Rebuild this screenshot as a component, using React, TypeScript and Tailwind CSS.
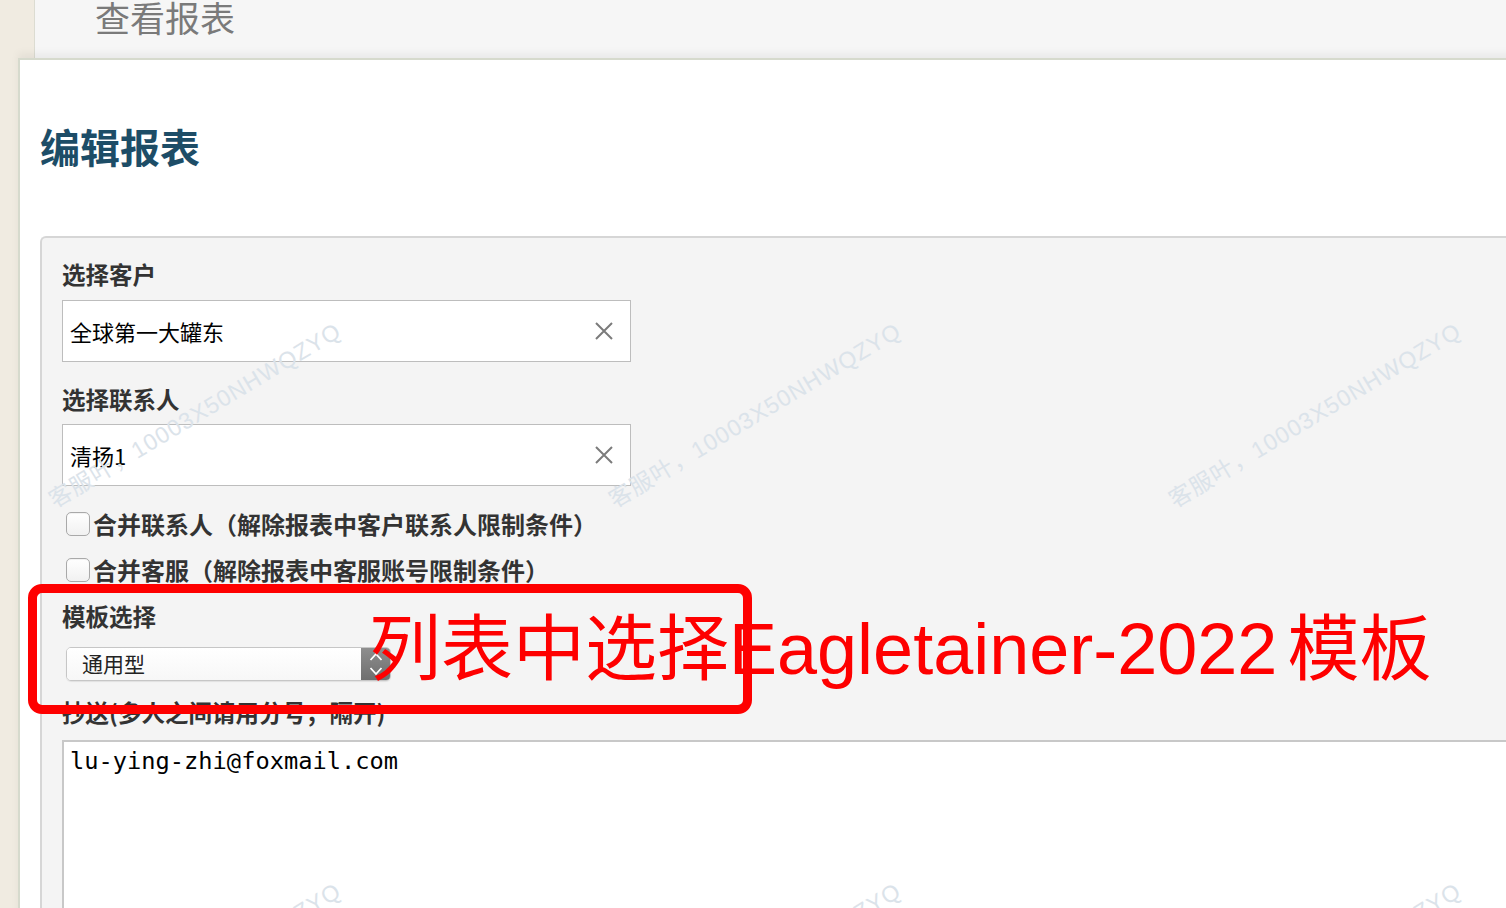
import React from 'react';

const CJK = '"Noto Sans CJK SC", "Liberation Sans", sans-serif';

const ClearIcon: React.FC = () => (
  <svg width="18" height="18" viewBox="0 0 18 18" className="shrink-0">
    <path d="M1 1 L17 17 M17 1 L1 17" stroke="#7b7b7b" strokeWidth="2" fill="none" />
  </svg>
);

const Field: React.FC<{ value: string }> = ({ value }) => (
  <div className="flex h-[62px] w-[569px] items-center justify-between border border-[#bdbdbd] bg-white pl-[7px] pr-[17px]">
    <span className="text-[22px] text-black">{value}</span>
    <ClearIcon />
  </div>
);

const Label: React.FC<{ children: React.ReactNode; className?: string }> = ({ children, className }) => (
  <div className={`h-[32px] text-[23.5px] font-bold leading-[32px] text-[#333] ${className ?? ''}`}>{children}</div>
);

const Check: React.FC<{ text: string; className?: string }> = ({ text, className }) => (
  <label className={`flex h-[34px] items-center ${className ?? ''}`}>
    <span className="ml-[4px] mr-[3px] h-[24px] w-[24px] rounded-[5px] border border-[#a9a9a9] bg-gradient-to-b from-white to-[#f1f1f1] shadow-[inset_0_1px_1px_rgba(0,0,0,0.06)]" />
    <span className="text-[24px] font-bold text-[#333]">{text}</span>
  </label>
);

const Watermark: React.FC<{ left: number; top: number }> = ({ left, top }) => (
  <div
    className="pointer-events-none absolute origin-bottom-left -rotate-[31deg] whitespace-nowrap text-[23px] leading-[24px] tracking-[1px] text-[#dbe3ea]"
    style={{ left, top, fontFamily: '"Liberation Sans", "Noto Sans CJK SC", sans-serif' }}
  >
    客服叶，10003X50NHWQZYQ
  </div>
);

export default function App() {
  return (
    <div className="relative h-[908px] w-[1506px] overflow-hidden bg-[#f0ebe1]" style={{ fontFamily: CJK }}>
      {/* page behind the dialog */}
      <div className="ml-[34px] h-full border-l border-[#dcdcd2] bg-[#f6f6f6]">
        <div className="-mt-[3px] pl-[60px] text-[35px] leading-[40px] text-[#7a7a7a]">查看报表</div>
      </div>

      {/* dialog */}
      <div className="absolute left-[18px] top-[58px] h-[900px] w-[1560px] border-l-2 border-t-2 border-[#d6dacd] bg-white shadow-[0_-5px_8px_rgba(0,0,0,0.05)]">
        <h1 className="pl-[20px] pt-[62px] text-[40px] font-bold leading-[48px] text-[#1d4d67]">编辑报表</h1>

        <div className="ml-[20px] mt-[66px] h-[700px] rounded-tl-[6px] border-l-2 border-t-2 border-[#d6d6d6] bg-[#f4f4f4] pl-[20px] pt-[20px]">
          <Label className="mb-[10px]">选择客户</Label>
          <Field value="全球第一大罐东" />
          <Label className="mb-[9px] mt-[21px]">选择联系人</Label>
          <Field value="清扬1" />

          <Check className="mt-[21px]" text="合并联系人（解除报表中客户联系人限制条件）" />
          <Check className="mt-[12px]" text="合并客服（解除报表中客服账号限制条件）" />

          <Label className="mt-[13px]">模板选择</Label>
          <div className="ml-[4px] mt-[15px] flex h-[34px] w-[325px] overflow-hidden rounded-[5px] border border-[#c6c6c6] shadow-[0_1px_1px_rgba(0,0,0,0.08)]">
            <div className="flex flex-1 items-center bg-gradient-to-b from-white to-[#f7f7f7] pl-[15px] text-[21px] text-[#222]">
              通用型
            </div>
            <div className="flex w-[29px] items-center justify-center bg-gradient-to-b from-[#8e8e8e] to-[#6f6f6f]">
              <svg width="16" height="30" viewBox="0 0 16 30">
                <path d="M2.5 11 L8 5 L13.5 11 M2.5 19 L8 25 L13.5 19" stroke="white" strokeWidth="1.8" fill="none" />
              </svg>
            </div>
          </div>

          <Label className="mt-[15px]">抄送(多人之间请用分号；隔开)</Label>
          <div className="mt-[12px] h-[300px] border-l-2 border-t-2 border-[#c8c8c8] bg-white px-[6px] pt-[3px]">
            <div className="text-[23.7px] leading-[32px] text-black" style={{ fontFamily: '"DejaVu Sans Mono", monospace' }}>
              lu-ying-zhi@foxmail.com
            </div>
          </div>
        </div>
      </div>

      {/* watermark layer */}
      <Watermark left={57} top={488} />
      <Watermark left={617} top={488} />
      <Watermark left={1177} top={488} />
      <Watermark left={57} top={1048} />
      <Watermark left={617} top={1048} />
      <Watermark left={1177} top={1048} />

      {/* annotation */}
      <div className="absolute left-[28px] top-[584px] h-[130px] w-[724px] rounded-[14px] border-[9px] border-[#fe0000]" />
      <div
        className="absolute left-[369px] top-[606px] flex whitespace-nowrap text-[72px] leading-[86px] text-[#fe0000]"
        style={{ fontFamily: '"Liberation Sans", "Noto Sans CJK SC", sans-serif' }}
      >
        <span>列表中选择Eagletainer-2022</span>
        <span className="ml-[10px]">模板</span>
      </div>
    </div>
  );
}
